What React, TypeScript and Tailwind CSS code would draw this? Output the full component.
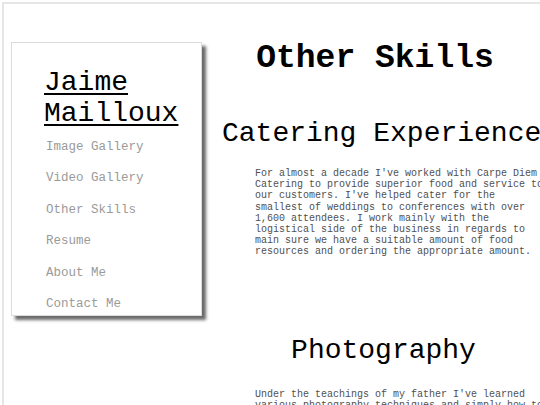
import React from 'react';

const links = ['Image Gallery', 'Video Gallery', 'Other Skills', 'Resume', 'About Me', 'Contact Me'];

const mono = {
  fontFamily: '"Courier New", "Liberation Mono", monospace',
};

const App: React.FC = () => {
  return (
    <div className="w-[540px] h-[405px] overflow-hidden bg-white" style={mono}>
      <div className="ml-[2px] mt-[2px] w-[700px] h-[600px] border-l-2 border-t-2 border-[#e6e6e6] flex items-start">
        {/* sidebar */}
        <div className="ml-[7px] mt-[38px] w-[191px] h-[274px] shrink-0 border border-[#dcdcdc] bg-white shadow-[4px_4px_3px_#6b6b6b] pl-[32px] pt-[24px]">
          <h1 className="text-[28px] leading-[31px] text-black underline underline-offset-[3px] decoration-[2px]">
            Jaime Mailloux
          </h1>
          <nav className="ml-[2px] mt-[3px]">
            {links.map((l) => (
              <a key={l} href="#" className="block text-[12.5px] leading-[31.4px] text-[#9a9a9a]">
                {l}
              </a>
            ))}
          </nav>
        </div>

        {/* main content */}
        <main className="ml-[20px] mt-[36px] w-[306px] shrink-0">
          <h2 className="text-[33px] leading-[38px] font-bold text-black text-center whitespace-nowrap">Other Skills</h2>
          <h3 className="mt-[40px] text-[28px] leading-[32px] text-black text-left whitespace-nowrap">
            Catering Experience
          </h3>
          <p className="mt-[18px] ml-[33px] w-[291px] text-[10px] leading-[11.2px] text-[#505050]">
            For almost a decade I've worked with Carpe Diem Catering to provide superior food and service to our
            customers. I've helped cater for the smallest of weddings to conferences with over 1,600 attendees. I work
            mainly with the logistical side of the business in regards to main sure we have a suitable amount of food
            resources and ordering the appropriate amount.
          </p>
          <h3 className="mt-[77px] pl-[17px] text-[28px] leading-[32px] text-black text-center whitespace-nowrap">
            Photography
          </h3>
          <p className="mt-[22px] ml-[33px] w-[291px] text-[10px] leading-[11.2px] text-[#505050]">
            Under the teachings of my father I've learned various photography techniques and simply how to capture
            the moment.
          </p>
        </main>
      </div>
    </div>
  );
};

export default App;
